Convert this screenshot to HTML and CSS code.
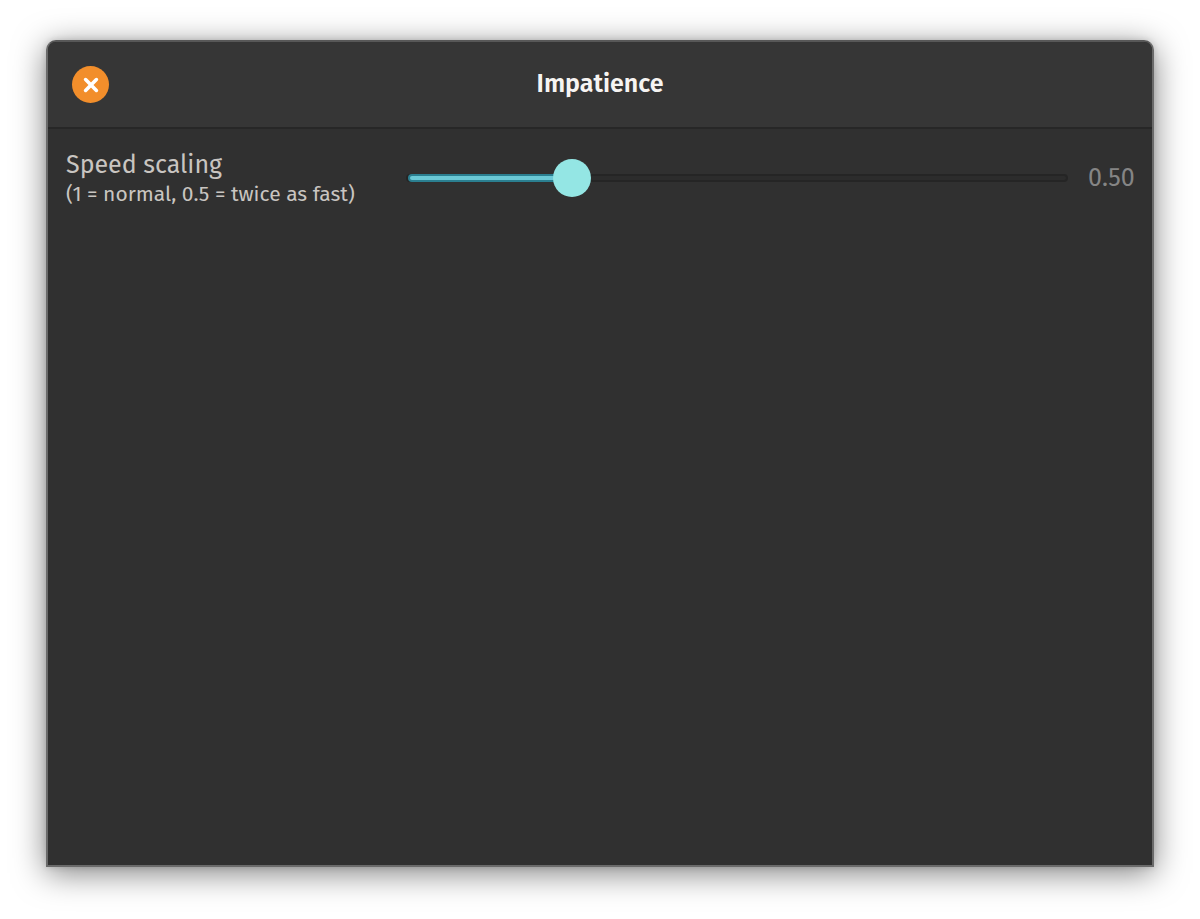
FILE: index.html
```
<!DOCTYPE html>
<html lang="en">
<head>
  <meta charset="UTF-8" />
  <title>Impatience</title>
  <meta name="viewport" content="width=device-width, initial-scale=1.0" />
  <link rel="stylesheet" href="styles.css">
</head>
<body>
  <div class="window">
    <header class="headerbar">
      <button class="close-btn" type="button" aria-label="Close">
        <svg width="16" height="16" viewBox="0 0 16 16" fill="none" stroke="#fff" stroke-width="3.6" stroke-linecap="round">
          <path d="M2.6 2.6 L13.4 13.4 M13.4 2.6 L2.6 13.4" />
        </svg>
      </button>
      <h1>Impatience</h1>
    </header>
    <main class="content">
      <div class="setting">
        <label class="setting-label" for="speed">
          <span class="name">Speed scaling</span>
          <span class="hint">(1 = normal, 0.5 = twice as fast)</span>
        </label>
        <div class="scale">
          <div class="trough"><div class="highlight" style="width: 25%"></div></div>
          <input type="range" id="speed" min="0" max="2" step="0.01" value="0.5">
        </div>
        <output class="value" for="speed">0.50</output>
      </div>
    </main>
  </div>
  <script>
    const speed = document.getElementById("speed");

    // Keep the filled part and the number in step with the slider
    speed.addEventListener("input", () => {
      document.querySelector(".highlight").style.width = (speed.value / speed.max * 100) + "%";
      document.querySelector(".value").textContent = Number(speed.value).toFixed(2);
    });
  </script>
</body>
</html>
```
FILE: styles.css
```
:root {
  --bg: #303030;
  --header-bg: #363636;
  --accent: #94e6e4;
  --fill: #6bc9d6;
  --close: #f28e2b;
}
* {
  box-sizing: border-box;
}
body {
  margin: 0;
  min-height: 100vh;
  padding: 40px 46px 52px;
  display: flex;
  background: #fff;
  font-family: "Fira Sans", "Noto Sans", sans-serif;
  color: #c9c5c1;
}
.window {
  flex: 1;
  display: flex;
  flex-direction: column;
  background: var(--bg);
  border: 2px solid #6a6a6a;
  border-top-color: #585858;
  border-radius: 10px 10px 0 0;
  box-shadow: 0 6px 32px rgba(0, 0, 0, 0.5), 0 0 6px rgba(0, 0, 0, 0.15);
}
.headerbar {
  display: grid;
  grid-template-columns: 37px 1fr 37px;
  align-items: center;
  height: 87px;
  padding: 0 24px;
  background: var(--header-bg);
  border-bottom: 2px solid #272727;
  border-radius: 8px 8px 0 0;
}
.close-btn {
  display: flex;
  align-items: center;
  justify-content: center;
  width: 37px;
  height: 37px;
  padding: 0;
  border: none;
  border-radius: 50%;
  background: var(--close);
  cursor: pointer;
}
h1 {
  margin: 0 0 2px;
  font-size: 25px;
  line-height: 32px;
  font-weight: 600;
  text-align: center;
  color: #f6f4f2;
}
.content {
  padding: 20px 18px;
}
.setting {
  display: grid;
  grid-template-columns: 340px 1fr 46px;
  align-items: center;
}
.setting-label {
  display: flex;
  flex-direction: column;
}
.name {
  font-size: 25px;
  line-height: 32px;
}
.hint {
  font-size: 21px;
  line-height: 26px;
  white-space: nowrap;
}
.scale {
  display: grid;
  align-items: center;
  margin-right: 20px;
}
.trough,
.scale input {
  grid-area: 1 / 1;
}
.trough {
  height: 8px;
  border: 2px solid #252525;
  border-radius: 4px;
  background: #2c2c2c;
}
.highlight {
  height: 8px;
  margin-top: -2px;
  border: 2px solid #2b7f90;
  border-radius: 4px;
  background: var(--fill);
}
/* The handle reaches past both ends of the trough by half its width */
.scale input {
  appearance: none;
  -webkit-appearance: none;
  height: 38px;
  margin: 0 -19px;
  background: transparent;
}
.scale input::-webkit-slider-thumb {
  -webkit-appearance: none;
  width: 38px;
  height: 38px;
  border-radius: 50%;
  background: var(--accent);
}
.scale input::-moz-range-thumb {
  width: 38px;
  height: 38px;
  border: none;
  border-radius: 50%;
  background: var(--accent);
}
.value {
  font-size: 25px;
  line-height: 32px;
  text-align: right;
  color: #858585;
}
```
